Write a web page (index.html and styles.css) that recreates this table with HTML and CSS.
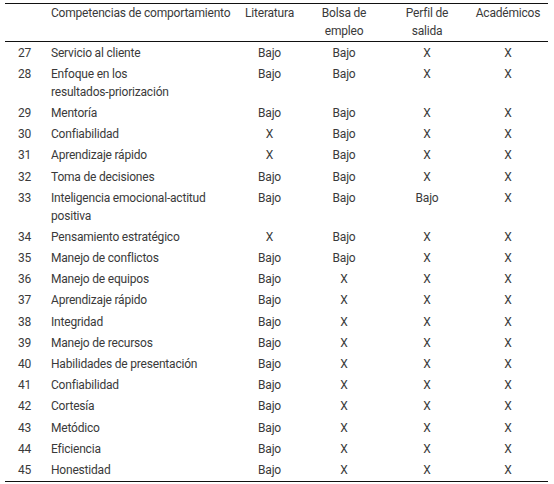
FILE: index.html
```html
<!DOCTYPE html>
<html lang="es">
<head>
<meta charset="utf-8">
<title>Competencias de comportamiento</title>
<link rel="stylesheet" href="styles.css">
</head>
<body>
<table class="comp">
  <colgroup>
    <col class="c-num"><col class="c-name"><col class="c-lit"><col class="c-bolsa"><col class="c-perfil"><col class="c-acad">
  </colgroup>
  <thead>
    <tr>
      <th class="num"></th>
      <th class="name">Competencias de comportamiento</th>
      <th>Literatura</th>
      <th>Bolsa de empleo</th>
      <th>Perfil de salida</th>
      <th>Académicos</th>
    </tr>
  </thead>
  <tbody>
    <tr><td class="num">27</td><td class="name">Servicio al cliente</td><td>Bajo</td><td>Bajo</td><td>X</td><td>X</td></tr>
    <tr><td class="num">28</td><td class="name">Enfoque en los <span class="nw">resultados-priorización</span></td><td>Bajo</td><td>Bajo</td><td>X</td><td>X</td></tr>
    <tr><td class="num">29</td><td class="name">Mentoría</td><td>Bajo</td><td>Bajo</td><td>X</td><td>X</td></tr>
    <tr><td class="num">30</td><td class="name">Confiabilidad</td><td>X</td><td>Bajo</td><td>X</td><td>X</td></tr>
    <tr><td class="num">31</td><td class="name">Aprendizaje rápido</td><td>X</td><td>Bajo</td><td>X</td><td>X</td></tr>
    <tr><td class="num">32</td><td class="name">Toma de decisiones</td><td>Bajo</td><td>Bajo</td><td>X</td><td>X</td></tr>
    <tr><td class="num">33</td><td class="name">Inteligencia <span class="nw">emocional-actitud</span> positiva</td><td>Bajo</td><td>Bajo</td><td>Bajo</td><td>X</td></tr>
    <tr><td class="num">34</td><td class="name">Pensamiento estratégico</td><td>X</td><td>Bajo</td><td>X</td><td>X</td></tr>
    <tr><td class="num">35</td><td class="name">Manejo de conflictos</td><td>Bajo</td><td>Bajo</td><td>X</td><td>X</td></tr>
    <tr><td class="num">36</td><td class="name">Manejo de equipos</td><td>Bajo</td><td>X</td><td>X</td><td>X</td></tr>
    <tr><td class="num">37</td><td class="name">Aprendizaje rápido</td><td>Bajo</td><td>X</td><td>X</td><td>X</td></tr>
    <tr><td class="num">38</td><td class="name">Integridad</td><td>Bajo</td><td>X</td><td>X</td><td>X</td></tr>
    <tr><td class="num">39</td><td class="name">Manejo de recursos</td><td>Bajo</td><td>X</td><td>X</td><td>X</td></tr>
    <tr><td class="num">40</td><td class="name">Habilidades de presentación</td><td>Bajo</td><td>X</td><td>X</td><td>X</td></tr>
    <tr><td class="num">41</td><td class="name">Confiabilidad</td><td>Bajo</td><td>X</td><td>X</td><td>X</td></tr>
    <tr><td class="num">42</td><td class="name">Cortesía</td><td>Bajo</td><td>X</td><td>X</td><td>X</td></tr>
    <tr><td class="num">43</td><td class="name">Metódico</td><td>Bajo</td><td>X</td><td>X</td><td>X</td></tr>
    <tr><td class="num">44</td><td class="name">Eficiencia</td><td>Bajo</td><td>X</td><td>X</td><td>X</td></tr>
    <tr><td class="num">45</td><td class="name">Honestidad</td><td>Bajo</td><td>X</td><td>X</td><td>X</td></tr>
  </tbody>
</table>
</body>
</html>
```
FILE: styles.css
```css
html, body {
  margin: 0;
  padding: 0;
  background: #ffffff;
}

body {
  font-family: "Roboto", "Liberation Sans", sans-serif;
  font-size: 12px;
  letter-spacing: -0.2px;
  color: #3a3a3a;
}

.comp {
  margin: 3px 0 0 5px;
  width: 543px;
  table-layout: fixed;
  border-collapse: collapse;
  border-top: 1.5px solid #111;
  border-bottom: 1.5px solid #111;
}

.c-num { width: 40px; }
.c-name { width: 192px; }
.c-lit { width: 65px; }
.c-bolsa { width: 84px; }
.c-perfil { width: 82px; }
.c-acad { width: 80px; }

.comp th {
  font-weight: normal;
  line-height: 18px;
  padding: 0 4px 1px;
  vertical-align: top;
  text-align: center;
  border-bottom: 1.5px solid #111;
}

.comp td {
  line-height: 18px;
  padding: 1.6px 4px;
  vertical-align: top;
  text-align: center;
}

.comp .num {
  text-align: left;
  padding-left: 13px;
  padding-right: 0;
}

.comp .name {
  text-align: left;
  padding-left: 6px;
  padding-right: 0;
}

.nw {
  white-space: nowrap;
}
```
